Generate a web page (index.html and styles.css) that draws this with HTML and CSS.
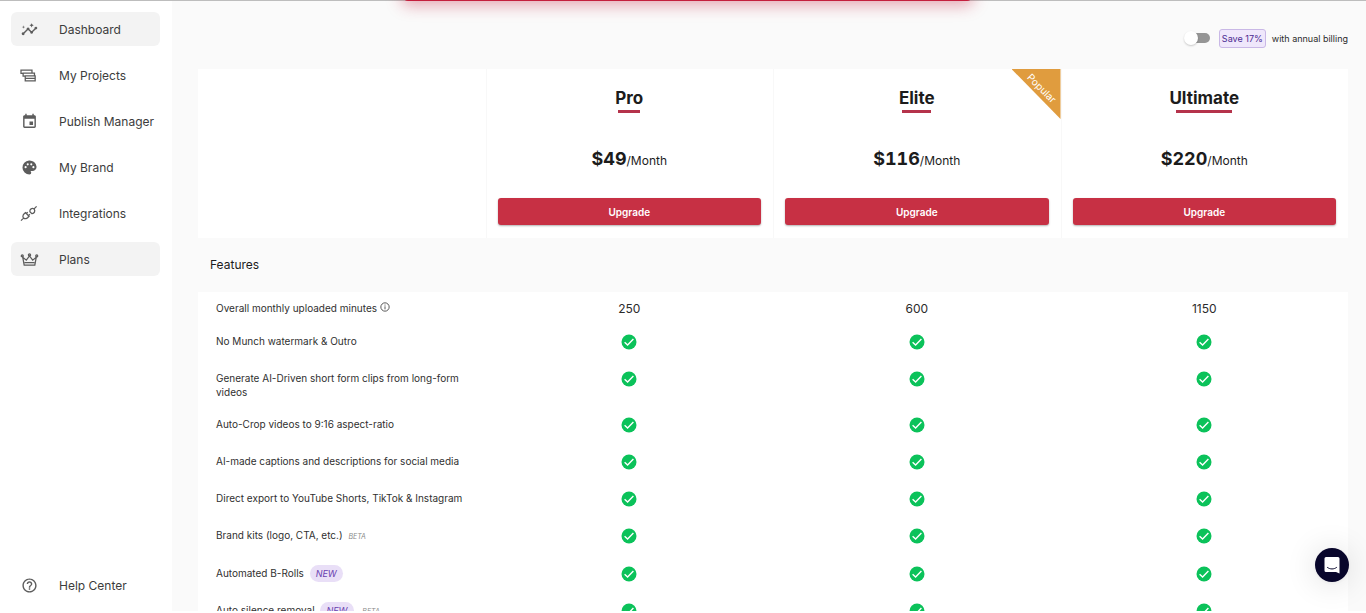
FILE: index.html
```html
<!DOCTYPE html>
<html lang="en">
<head>
<meta charset="utf-8">
<title>Plans</title>
<link rel="stylesheet" href="styles.css">
</head>
<body>
<!-- shared shapes -->
<svg class="defs" aria-hidden="true">
  <symbol id="check" viewBox="0 0 16 16">
    <circle cx="8" cy="8" r="7.5" fill="#0bc25a"/>
    <path d="M3.600 8.300l3 2.800 5.800-6" fill="none" stroke="#fff" stroke-width="1.4"/>
  </symbol>
</svg>

<div class="banner"></div>

<div class="app">
  <nav class="sidebar">
    <a class="item active" href="#">
      <svg class="icon" viewBox="0 0 24 24"><path d="M21 8c-1.45 0-2.26 1.44-1.93 2.51l-3.55 3.56c-.3-.09-.74-.09-1.04 0l-2.55-2.55C12.27 10.45 11.46 9 10 9c-1.45 0-2.27 1.44-1.93 2.52l-4.56 4.55C2.44 15.74 1 16.55 1 18c0 1.1.9 2 2 2 1.45 0 2.26-1.44 1.93-2.51l4.55-4.56c.3.09.74.09 1.04 0l2.55 2.55C12.73 16.55 13.54 18 15 18c1.45 0 2.27-1.44 1.93-2.52l3.56-3.55c1.07.33 2.51-.48 2.51-1.93 0-1.1-.9-2-2-2z"/><path d="M15 9l.94-2.07L18 6l-2.06-.93L15 3l-.92 2.07L12 6l2.08.93zM3.5 11L4 9l2-.5L4 8l-.5-2L3 8l-2 .5L3 9z"/></svg>
      Dashboard
    </a>
    <a class="item" href="#">
      <svg class="icon line" viewBox="0 0 24 24"><path d="M3 9H0V4.500h15.500V8M6.500 13H3V8.500h16V12M6 12.500h14V19.500H6zM6 16h14"/></svg>
      My Projects
    </a>
    <a class="item" href="#">
      <svg class="icon" viewBox="0 0 24 24"><path d="M17 12h-5v5h5v-5zM16 1v2H8V1H6v2H5c-1.110 0-1.990.9-1.990 2L3 19c0 1.100.89 2 2 2h14c1.100 0 2-.9 2-2V5c0-1.100-.9-2-2-2h-1V1h-2zm3 18H5V8h14v11z"/></svg>
      Publish Manager
    </a>
    <a class="item" href="#">
      <svg class="icon" viewBox="0 0 24 24"><path fill-rule="evenodd" d="M12 22a10 10 0 1 1 10-11c0 3.310-2.700 6-6 6h-1.800c-.28 0-.5.22-.5.5 0 .12.050.230.130.330.410.470.640 1.060.640 1.670A2.500 2.500 0 0 1 12 22zM6.500 13a1.500 1.500 0 1 0 0-3 1.500 1.500 0 0 0 0 3zM9.500 9a1.500 1.500 0 1 0 0-3 1.500 1.500 0 0 0 0 3zM14.500 9a1.500 1.500 0 1 0 0-3 1.500 1.500 0 0 0 0 3zM17.500 13a1.500 1.500 0 1 0 0-3 1.500 1.500 0 0 0 0 3z"/></svg>
      My Brand
    </a>
    <a class="item" href="#">
      <svg class="icon line" viewBox="0 0 24 24"><path d="M0 22l3.500-3.500M18.500 5.500L22 2M3.500 18.500c-2-3 0-6.500 3-7.500l4.500 4.500c-1 3-4.500 5-7.500 3zM5.500 10l6.500 6.500M7.500 12l2-2M10.500 15l2-2M18.500 5.500c-3-1.500-6.500 0-6 4l2.500 2.500c4 .5 5.500-3.500 3.500-6.500z"/></svg>
      Integrations
    </a>
    <a class="item active" href="#">
      <svg class="icon line" viewBox="0 0 24 24"><path d="M4.500 20h15l2-11-5 4L12 7l-4.500 6-5-4zM5 16.500h14"/><circle cx="1.800" cy="7" r="1.400"/><circle cx="12" cy="5.500" r="1.500"/><circle cx="22.200" cy="7" r="1.400"/></svg>
      Plans
    </a>
    <a class="item help" href="#">
      <svg class="icon" viewBox="0 0 24 24"><path d="M11 18h2v-2h-2v2zm1-16C6.480 2 2 6.480 2 12s4.480 10 10 10 10-4.480 10-10S17.520 2 12 2zm0 18c-4.410 0-8-3.590-8-8s3.590-8 8-8 8 3.590 8 8-3.590 8-8 8zm0-14c-2.210 0-4 1.790-4 4h2c0-1.100.9-2 2-2s2 .9 2 2c0 2-3 1.750-3 5h2c0-2.250 3-2.500 3-5 0-2.210-1.790-4-4-4z"/></svg>
      Help Center
    </a>
  </nav>

  <main class="main">
    <label class="billing">
      <input class="switch" type="checkbox">
      <span class="save">Save 17%</span>
      <span>with annual billing</span>
    </label>

    <div class="plans">
      <div class="plan"></div>
      <section class="plan">
        <h2>Pro</h2>
        <p class="price"><strong>$49</strong>/Month</p>
        <button class="upgrade" type="button">Upgrade</button>
      </section>
      <section class="plan">
        <div class="ribbon"><span>Popular</span></div>
        <h2>Elite</h2>
        <p class="price"><strong>$116</strong>/Month</p>
        <button class="upgrade" type="button">Upgrade</button>
      </section>
      <section class="plan">
        <h2>Ultimate</h2>
        <p class="price"><strong>$220</strong>/Month</p>
        <button class="upgrade" type="button">Upgrade</button>
      </section>
    </div>

    <h3 class="features-title">Features</h3>

    <table class="features">
      <tr class="minutes">
        <th scope="row">Overall monthly uploaded minutes
          <svg class="info" viewBox="0 0 12 12"><circle cx="6" cy="6" r="5"/><path d="M6 5.200v3.600M6 3.100v1.200"/></svg></th>
        <td>250</td><td>600</td><td>1150</td>
      </tr>
      <tr>
        <th scope="row">No Munch watermark &amp; Outro</th>
        <td><svg class="check"><use href="#check"/></svg></td>
        <td><svg class="check"><use href="#check"/></svg></td>
        <td><svg class="check"><use href="#check"/></svg></td>
      </tr>
      <tr>
        <th scope="row">Generate AI-Driven short form clips from long-form videos</th>
        <td><svg class="check"><use href="#check"/></svg></td>
        <td><svg class="check"><use href="#check"/></svg></td>
        <td><svg class="check"><use href="#check"/></svg></td>
      </tr>
      <tr>
        <th scope="row">Auto-Crop videos to 9:16 aspect-ratio</th>
        <td><svg class="check"><use href="#check"/></svg></td>
        <td><svg class="check"><use href="#check"/></svg></td>
        <td><svg class="check"><use href="#check"/></svg></td>
      </tr>
      <tr>
        <th scope="row">AI-made captions and descriptions for social media</th>
        <td><svg class="check"><use href="#check"/></svg></td>
        <td><svg class="check"><use href="#check"/></svg></td>
        <td><svg class="check"><use href="#check"/></svg></td>
      </tr>
      <tr>
        <th scope="row">Direct export to YouTube Shorts, TikTok &amp; Instagram</th>
        <td><svg class="check"><use href="#check"/></svg></td>
        <td><svg class="check"><use href="#check"/></svg></td>
        <td><svg class="check"><use href="#check"/></svg></td>
      </tr>
      <tr class="tagged">
        <th scope="row">Brand kits (logo, CTA, etc.) <em class="beta">BETA</em></th>
        <td><svg class="check"><use href="#check"/></svg></td>
        <td><svg class="check"><use href="#check"/></svg></td>
        <td><svg class="check"><use href="#check"/></svg></td>
      </tr>
      <tr>
        <th scope="row">Automated B-Rolls <em class="new">NEW</em></th>
        <td><svg class="check"><use href="#check"/></svg></td>
        <td><svg class="check"><use href="#check"/></svg></td>
        <td><svg class="check"><use href="#check"/></svg></td>
      </tr>
      <tr>
        <th scope="row">Auto silence removal <em class="new">NEW</em> <em class="beta">BETA</em></th>
        <td><svg class="check"><use href="#check"/></svg></td>
        <td><svg class="check"><use href="#check"/></svg></td>
        <td><svg class="check"><use href="#check"/></svg></td>
      </tr>
    </table>
  </main>
</div>

<button class="chat" type="button" aria-label="Open chat">
  <svg viewBox="0 0 18 18"><path d="M3 1h12a1.500 1.500 0 0 1 1.500 1.500V17.500L13 16H3a1.500 1.500 0 0 1-1.500-1.500v-12A1.500 1.500 0 0 1 3 1z" fill="#fff"/><path d="M4.500 11.500c2.600 2 6.400 2 9 0" fill="none" stroke="#08062b" stroke-linecap="round"/></svg>
</button>
</body>
</html>
```

FILE: styles.css
```css
* {
  box-sizing: border-box;
}

body {
  margin: 0;
  padding-bottom: 2px;
  height: 100vh;
  overflow: hidden;
  background: #fff;
  color: #1c1c1c;
  font-family: Inter, "Liberation Sans", sans-serif;
  font-size: 12px;
}

h2, h3, p {
  margin: 0;
}

.defs {
  position: absolute;
  width: 0;
  height: 0;
}

.banner {
  position: absolute;
  top: -40px;
  left: 50%;
  width: 571px;
  height: 41px;
  margin-left: -281px;
  border-radius: 6px;
  background: #c41f3d;
  box-shadow: 0 4px 16px rgba(196, 31, 61, 0.4);
}

.app {
  display: flex;
  height: 100%;
  overflow: hidden;
  border-top: 1px solid #bdbdbd;
}

/* sidebar */
.sidebar {
  display: flex;
  flex-direction: column;
  flex: none;
  gap: 12px;
  width: 172px;
  padding: 11px 12px 9px 11px;
  background: #fff;
}

.item {
  display: flex;
  align-items: center;
  gap: 21px;
  height: 34px;
  padding-left: 10px;
  border-radius: 6px;
  color: #3c3c3c;
  font-size: 12px;
  white-space: nowrap;
  text-decoration: none;
}

.item.active {
  background: #f3f3f3;
}

.help {
  margin-top: auto;
}

.icon {
  flex: none;
  width: 17px;
  height: 17px;
  fill: #5c5c5c;
}

.icon.line {
  overflow: visible;
  fill: none;
  stroke: #5c5c5c;
  stroke-width: 1.8;
}

/* main column */
.main {
  flex: 1;
  padding: 27px 18px 0 26px;
  background: #fafafa;
}

.billing {
  display: flex;
  align-items: center;
  justify-content: flex-end;
  gap: 6px;
  height: 20px;
  color: #2b2b2b;
  font-size: 9px;
}

.switch {
  appearance: none;
  position: relative;
  width: 22px;
  height: 10px;
  margin: 0 3px 0 0;
  border-radius: 5px;
  background: #959595;
}

.switch::before {
  content: "";
  position: absolute;
  top: -2px;
  left: -4px;
  width: 14px;
  height: 14px;
  border-radius: 50%;
  background: #fff;
  box-shadow: 0 1px 2px rgba(0, 0, 0, 0.2);
}

.save {
  padding: 3px 2px;
  border: 1px solid #c9b8e6;
  border-radius: 3px;
  background: #efe7fb;
  color: #4b2a91;
  line-height: 11px;
}

/* plan headers */
.plans {
  display: grid;
  grid-template-columns: repeat(4, 1fr);
  margin-top: 21px;
  background: #fff;
}

.plan {
  position: relative;
  display: flex;
  flex-direction: column;
  align-items: center;
  height: 169px;
  padding: 18px 12px 0;
  box-shadow: inset 1px 0 #f8f8f8;
}

.plan:first-child {
  box-shadow: none;
}

.plan h2 {
  font-size: 17px;
  font-weight: 700;
  line-height: 22px;
}

.plan h2::after {
  content: "";
  display: block;
  width: 80%;
  height: 3px;
  margin: 1px auto 0;
  background: #b5334b;
}

.price {
  margin-top: 34px;
  font-size: 12px;
  line-height: 24px;
}

.price strong {
  font-size: 18px;
  font-weight: 700;
  font-variant-numeric: tabular-nums;
}

.upgrade {
  align-self: stretch;
  height: 27px;
  margin-top: 25px;
  padding: 0;
  border: 0;
  border-radius: 3px;
  background: #c73044;
  box-shadow: 0 1px 2px rgba(0, 0, 0, 0.3);
  color: #fff;
  font: 600 10px Inter, "Liberation Sans", sans-serif;
}

.ribbon {
  position: absolute;
  top: 0;
  right: 0;
  width: 49px;
  height: 50px;
  background: #e09c3e;
  clip-path: polygon(0 0, 100% 0, 100% 100%);
  color: #fff;
  font-size: 10px;
  line-height: 12px;
}

.ribbon span {
  position: absolute;
  top: 13px;
  left: 9px;
  width: 42px;
  text-align: center;
  transform: rotate(45deg);
}

/* feature table */
.features-title {
  padding: 18px 12px;
  font-size: 12px;
  font-weight: 400;
  line-height: 18px;
}

.features {
  width: 100%;
  table-layout: fixed;
  border-collapse: collapse;
  background: #fff;
}

.features tr {
  height: 37px;
}

.features th,
.features td {
  padding: 9px 12px 0;
  vertical-align: top;
  line-height: 14px;
}

.features th {
  padding: 9px 18px 9px;
  color: #303030;
  font-size: 10px;
  font-weight: 400;
  text-align: left;
}

.features td {
  color: #2b2b2b;
  font-size: 12px;
  text-align: center;
}

.features .minutes {
  height: 33px;
}

.features .minutes td {
  padding-top: 10px;
}

.features .tagged {
  height: 38px;
}

.check {
  display: block;
  width: 16px;
  height: 16px;
  margin: 0 auto;
}

.info {
  width: 10px;
  height: 10px;
  fill: none;
  stroke: #3a3a3a;
}

.new {
  display: inline-block;
  margin: -2px 3px;
  padding: 0 6px;
  border-radius: 9px;
  background: #e9dff7;
  color: #6a3fb0;
  font-size: 9px;
  line-height: 17px;
}

.beta {
  margin-left: 3px;
  color: #8a8a8a;
  font-size: 7px;
}

/* chat launcher */
.chat {
  position: fixed;
  right: 17px;
  bottom: 31px;
  display: flex;
  align-items: center;
  justify-content: center;
  width: 34px;
  height: 34px;
  padding: 0;
  border: 0;
  border-radius: 50%;
  background: #08062b;
  box-shadow: 0 1px 4px rgba(0, 0, 0, 0.06), 0 2px 32px rgba(0, 0, 0, 0.14);
}

.chat svg {
  width: 18px;
  height: 18px;
}
```
